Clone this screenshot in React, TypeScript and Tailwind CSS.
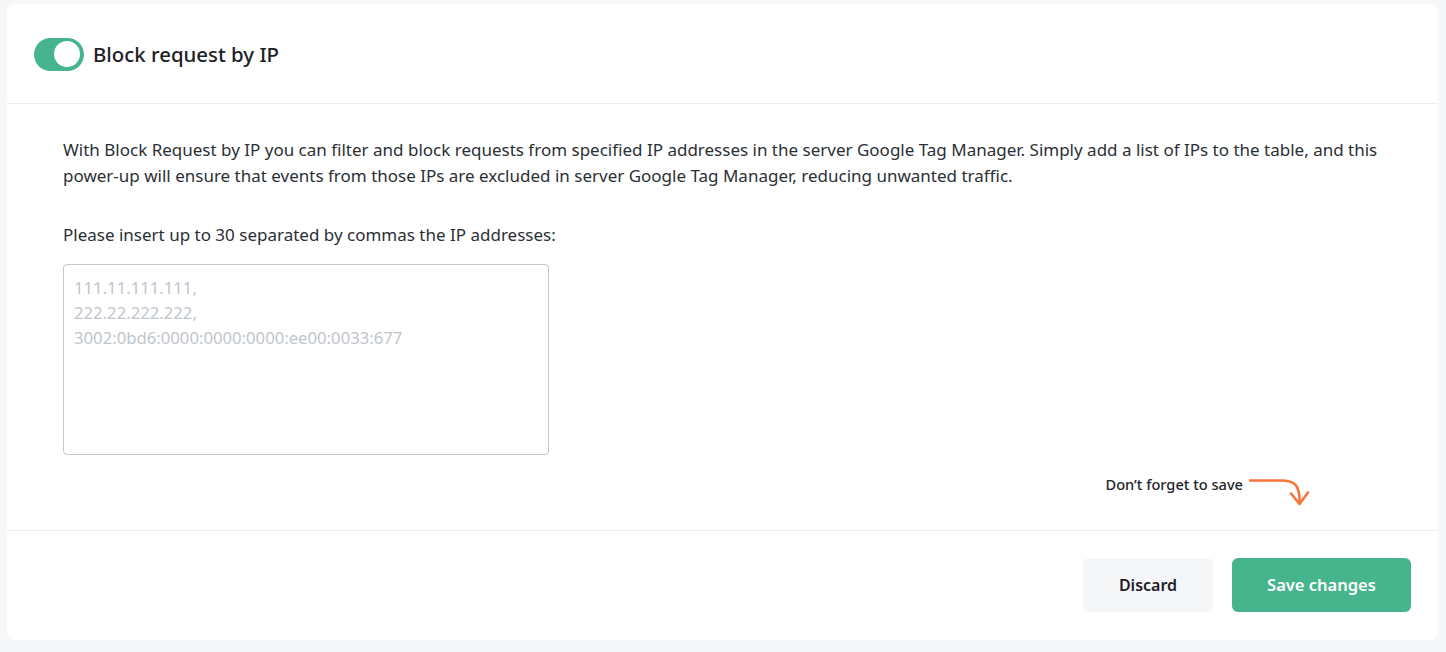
import { useState } from "react";

function Toggle({ on, onChange }: { on: boolean; onChange: (v: boolean) => void }) {
  return (
    <button
      type="button"
      onClick={() => onChange(!on)}
      className={`flex h-[33px] w-[50px] shrink-0 items-center rounded-full px-[4px] ${
        on ? "justify-end bg-[#46b48c]" : "justify-start bg-[#cfd4da]"
      }`}
    >
      <span className="h-[26px] w-[26px] rounded-full bg-white" />
    </button>
  );
}

function CurvedArrow() {
  return (
    <svg width="62" height="30" viewBox="0 0 62 30" fill="none" className="shrink-0">
      <path
        d="M1 3.5 H32 C45 3.5 51 7 50.5 26"
        stroke="#f9733a"
        strokeWidth="2.6"
        strokeLinecap="round"
      />
      <path
        d="M42 16.5 L50.5 27 L59 15.5"
        stroke="#f9733a"
        strokeWidth="2.6"
        strokeLinecap="round"
        strokeLinejoin="round"
      />
    </svg>
  );
}

export default function App() {
  const [enabled, setEnabled] = useState(true);
  const [ips, setIps] = useState("");

  return (
    <div className="h-[652px] w-full bg-[#f6f7f9] pb-[12px] pl-[7px] pr-[8px] pt-[4px] font-['Noto_Sans',sans-serif] text-[#23262b]">
      <div className="flex h-full flex-col rounded-lg bg-white">
        <div className="flex h-[100px] items-center gap-[9px] border-b border-[#ebedf0] px-[27px] pt-[1px]">
          <Toggle on={enabled} onChange={setEnabled} />
          <h1 className="text-[20.4px] font-medium text-[#1d2025]">Block request by IP</h1>
        </div>

        <div className="flex flex-1 flex-col px-[56px] pt-[33px]">
          <p className="text-[17px] leading-[26px] text-[#2b2f35]">
            With Block Request by IP you can filter and block requests from specified IP addresses in
            the server Google Tag Manager. Simply add a list of IPs to the table, and this power-up
            will ensure that events from those IPs are excluded in server Google Tag Manager,
            reducing unwanted traffic.
          </p>

          <label className="mt-[33px] text-[17px] leading-[26px] text-[#2b2f35]">
            Please insert up to 30 separated by commas the IP addresses:
          </label>

          <textarea
            value={ips}
            onChange={(e) => setIps(e.target.value)}
            placeholder={"111.11.111.111,\n222.22.222.222,\n3002:0bd6:0000:0000:0000:ee00:0033:677"}
            className="mt-[16px] h-[191px] w-[486px] resize-none rounded-[4px] border border-[#c3c8ce] px-[10px] pt-[10px] text-[16.7px] leading-[25px] text-[#2b2f35] outline-none placeholder:text-[#bfc5cc]"
          />

          <div className="mr-[71px] mt-[22px] flex items-start justify-end gap-[6px]">
            <span className="text-[14.6px] font-medium leading-[14px] text-[#23262b]">
              Don’t forget to save
            </span>
            <CurvedArrow />
          </div>
        </div>

        <div className="flex items-center justify-end gap-[19px] border-t border-[#ebedf0] pb-[28px] pl-[27px] pr-[27px] pt-[27px]">
          <button
            type="button"
            className="h-[54px] w-[130px] rounded-md bg-[#f5f6f8] text-[16px] font-semibold text-[#1d2025]"
          >
            Discard
          </button>
          <button
            type="button"
            className="h-[54px] w-[179px] rounded-md bg-[#46b48c] text-[16.5px] font-semibold text-white"
          >
            Save changes
          </button>
        </div>
      </div>
    </div>
  );
}
